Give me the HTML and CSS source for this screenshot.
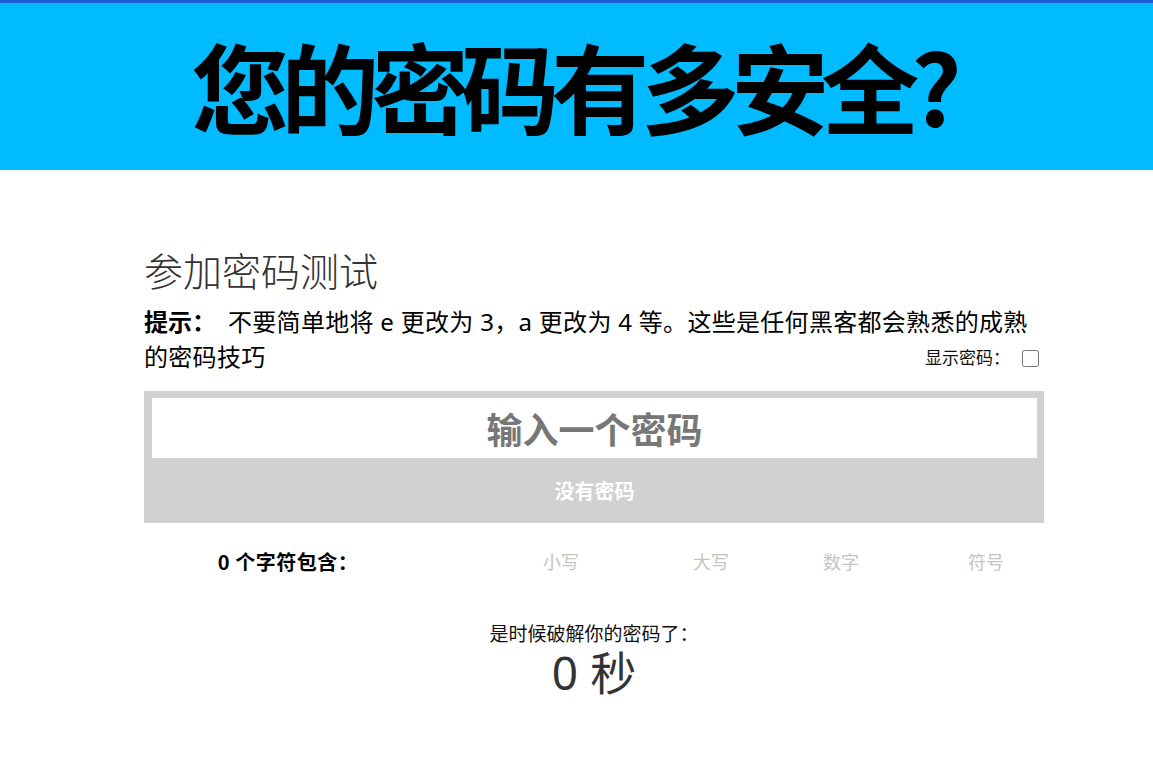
FILE: index.html
```html
<!DOCTYPE html>
<html lang="zh-CN">
<head>
<meta charset="utf-8">
<title>您的密码有多安全？</title>
<link rel="stylesheet" href="styles.css">
</head>
<body>
<header class="banner">
  <h1 class="banner-title">您的密码有多安全?</h1>
</header>
<main class="tester">
  <h2 class="tester-heading">参加密码测试</h2>
  <p class="hint"><strong class="hint-label">提示：</strong><span class="hint-text">不要简单地将 e 更改为 3，a 更改为 4 等。这些是任何黑客都会熟悉的成熟</span><span class="hint-text">的密码技巧</span><label class="show-pass">显示密码：<input type="checkbox" class="show-check"></label></p>
  <div class="pass-box">
    <input type="password" class="pass-input" placeholder="输入一个密码">
    <div class="meter">没有密码</div>
  </div>
  <div class="composition">
    <span class="comp-label">0 个字符包含：</span>
    <span class="comp-item">小写</span>
    <span class="comp-item">大写</span>
    <span class="comp-item">数字</span>
    <span class="comp-item">符号</span>
  </div>
  <div class="crack">
    <div class="crack-label">是时候破解你的密码了：</div>
    <div class="crack-time">0 秒</div>
  </div>
</main>
</body>
</html>
```
FILE: styles.css
```css
html, body {
  margin: 0;
  padding: 0;
  background: #ffffff;
}
body {
  font-family: "Noto Sans", "Noto Sans CJK SC", sans-serif;
  color: #000;
}
.banner {
  border-top: 3px solid #1a5fd8;
  background: #00bbff;
  height: 167px;
  display: flex;
  align-items: center;
  justify-content: center;
}
.banner-title {
  margin: 0;
  font-family: "Noto Sans CJK SC", sans-serif;
  font-weight: 700;
  font-size: 98px;
  line-height: 1;
  letter-spacing: -8px;
  color: #000;
  padding-right: 8px;
  position: relative;
  top: -3px;
}
.tester {
  width: 900px;
  margin-left: 144px;
}
.tester-heading {
  margin: 76px 0 0;
  font-family: "Noto Sans CJK SC", sans-serif;
  font-weight: 300;
  font-size: 39px;
  line-height: 46px;
  color: #333;
}
.hint {
  margin: 11px 0 0;
  padding-right: 14px;
  font-family: "Noto Sans", "Noto Sans CJK SC", sans-serif;
  font-size: 24px;
  line-height: 35px;
  color: #000;
}
.hint-text {
  letter-spacing: 0.3px;
}
.hint-label {
  font-family: "Noto Sans CJK SC", sans-serif;
  font-weight: 700;
  font-size: 24px;
  margin-right: 12px;
}
.show-pass {
  float: right;
  margin-right: -12px;
  font-family: "Noto Sans CJK SC", sans-serif;
  font-size: 17px;
  line-height: 35px;
  color: #111;
}
.show-check {
  width: 17px;
  height: 17px;
  margin: 0 3px 0 12px;
  vertical-align: -3px;
}
.pass-box {
  margin-top: 17px;
  background: #d1d1d1;
  padding: 7px 7px 0 8px;
}
.pass-input {
  display: block;
  box-sizing: border-box;
  width: 100%;
  height: 60px;
  margin: 0;
  border: none;
  outline: none;
  background: #fff;
  text-align: center;
  font-family: "Noto Sans CJK SC", sans-serif;
  font-weight: 700;
  font-size: 36px;
  color: #777;
}
.pass-input::placeholder {
  color: #777;
  opacity: 1;
}
.meter {
  height: 65px;
  display: flex;
  align-items: center;
  justify-content: center;
  font-family: "Noto Sans CJK SC", sans-serif;
  font-weight: 700;
  font-size: 20px;
  color: #fff;
}
.composition {
  margin-top: 23px;
  display: grid;
  grid-template-columns: 288px 258px 42px 218px 72px;
  justify-items: center;
  align-items: center;
  height: 30px;
  font-family: "Noto Sans CJK SC", sans-serif;
}
.comp-label {
  font-weight: 700;
  font-size: 20px;
  letter-spacing: 0.5px;
  color: #000;
  white-space: nowrap;
}
.comp-item {
  font-size: 18px;
  color: #c4c4c4;
  white-space: nowrap;
}
.crack {
  margin-top: 46px;
  text-align: center;
  font-family: "Noto Sans", "Noto Sans CJK SC", sans-serif;
}
.crack-label {
  font-size: 19px;
  line-height: 24px;
  color: #111;
}
.crack-time {
  margin-top: 2px;
  font-size: 46px;
  line-height: 48px;
  color: #333;
}
```
